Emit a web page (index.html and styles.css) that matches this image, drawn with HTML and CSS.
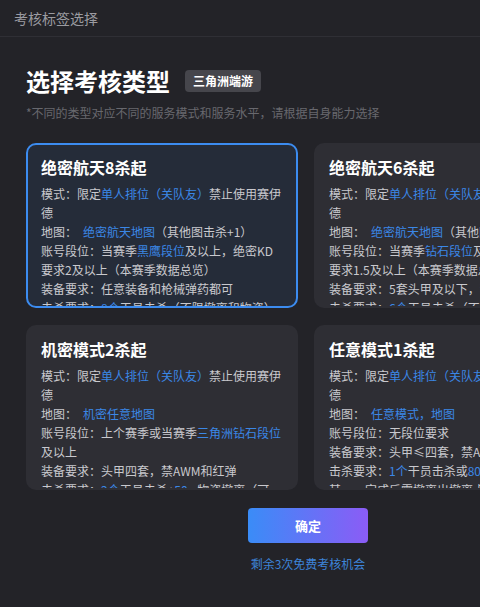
FILE: index.html
```html
<!DOCTYPE html>
<html lang="zh-CN">
<head>
    <meta charset="UTF-8">
    <title>考核标签选择</title>
    <link rel="stylesheet" href="styles.css">
</head>
<body>
    <div class="topbar">考核标签选择</div>

    <div class="main">
        <div class="intro">
            <h1>选择考核类型</h1>
            <span class="tag">三角洲端游</span>
        </div>
        <p class="hint">*不同的类型对应不同的服务模式和服务水平，请根据自身能力选择</p>

        <div class="cards">
            <div class="card active">
                <h2>绝密航天8杀起</h2>
                <p>模式：限定<em>单人排位（关队友）</em>禁止使用赛伊德</p>
                <p>地图：<em class="gap">绝密航天地图</em>（其他图击杀+1）</p>
                <p>账号段位：当赛季<em>黑鹰段位</em>及以上，绝密KD要求2及以上（本赛季数据总览）</p>
                <p>装备要求：任意装备和枪械弹药都可</p>
                <p>击杀要求：<em>8个</em>干员击杀（不限撤离和物资）</p>
            </div>
            <div class="card">
                <h2>绝密航天6杀起</h2>
                <p>模式：限定<em>单人排位（关队友）</em>禁止使用赛伊德</p>
                <p>地图：<em class="gap">绝密航天地图</em>（其他图击杀+1）</p>
                <p>账号段位：当赛季<em>钻石段位</em>及以上，绝密KD要求1.5及以上（本赛季数据总览）</p>
                <p>装备要求：5套头甲及以下，禁AWM和红弹</p>
                <p>击杀要求：<em>6个</em>干员击杀（不限撤离和物资）</p>
            </div>
            <div class="card">
                <h2>机密模式2杀起</h2>
                <p>模式：限定<em>单人排位（关队友）</em>禁止使用赛伊德</p>
                <p>地图：<em class="gap">机密任意地图</em></p>
                <p>账号段位：上个赛季或当赛季<em>三角洲钻石段位</em>及以上</p>
                <p>装备要求：头甲四套，禁AWM和红弹</p>
                <p>击杀要求：<em>2个</em>干员击杀+<em>50w</em>物资撤离（可无）</p>
            </div>
            <div class="card">
                <h2>任意模式1杀起</h2>
                <p>模式：限定<em>单人排位（关队友）</em>禁止使用赛伊德</p>
                <p>地图：<em class="gap">任意模式，地图</em></p>
                <p>账号段位：无段位要求</p>
                <p>装备要求：头甲≤四套，禁AWM和红弹</p>
                <p>击杀要求：<em>1个</em>干员击杀或<em>80w</em>物资撤离二选其一，完成后需撤离出撤离点，禁止跳舱</p>
            </div>
        </div>

        <div class="actions">
            <button class="confirm">确定</button>
            <a class="remain">剩余3次免费考核机会</a>
        </div>
    </div>
</body>
</html>
```

FILE: styles.css
```css
body {
    margin: 0;
    background: #232328;
    color: #c9c9ce;
    font-family: "Noto Sans CJK SC", "Liberation Sans", sans-serif;
    overflow: hidden;
}
.topbar {
    height: 36px;
    line-height: 36px;
    padding: 0 14px;
    font-size: 14px;
    color: #9b9ba1;
    border-bottom: 1px solid #2f2f35;
}
.main {
    width: 564px;
    padding: 27px 26px 0;
}
.intro {
    display: flex;
    align-items: center;
    gap: 15px;
}
.intro h1 {
    margin: 0;
    font-size: 24px;
    line-height: 34px;
    font-weight: bold;
    color: #ffffff;
}
.tag {
    background: #46464c;
    color: #ffffff;
    font-size: 12px;
    font-weight: bold;
    line-height: 22px;
    padding: 0 8px;
    border-radius: 4px;
}
.hint {
    margin: 6px 0 0;
    font-size: 12px;
    line-height: 18px;
    color: #68686e;
}
.cards {
    display: grid;
    grid-template-columns: repeat(2, 272px);
    gap: 17px 16px;
    margin-top: 21px;
}
.card {
    box-sizing: border-box;
    height: 165px;
    overflow: hidden;
    padding: 10px 13px;
    background: #2e2e34;
    border: 2px solid transparent;
    border-radius: 10px;
}
.card.active {
    background: #252c39;
    border-color: #3c8cf0;
}
.card h2 {
    margin: 0 0 5px;
    font-size: 16px;
    line-height: 24px;
    font-weight: bold;
    color: #ffffff;
}
.card p {
    margin: 0;
    font-size: 12px;
    line-height: 19px;
}
.card em {
    font-style: normal;
    color: #3b87e6;
}
.card em.gap {
    margin-left: 6px;
}
.actions {
    display: flex;
    flex-direction: column;
    align-items: center;
    margin-top: 18px;
}
.confirm {
    width: 120px;
    height: 35px;
    border: none;
    border-radius: 4px;
    background: linear-gradient(90deg, #3a8cf7, #8b5cf6);
    color: #ffffff;
    font-family: inherit;
    font-size: 13px;
    font-weight: bold;
}
.remain {
    margin-top: 10px;
    font-size: 12px;
    line-height: 22px;
    color: #3d84d8;
}
```
